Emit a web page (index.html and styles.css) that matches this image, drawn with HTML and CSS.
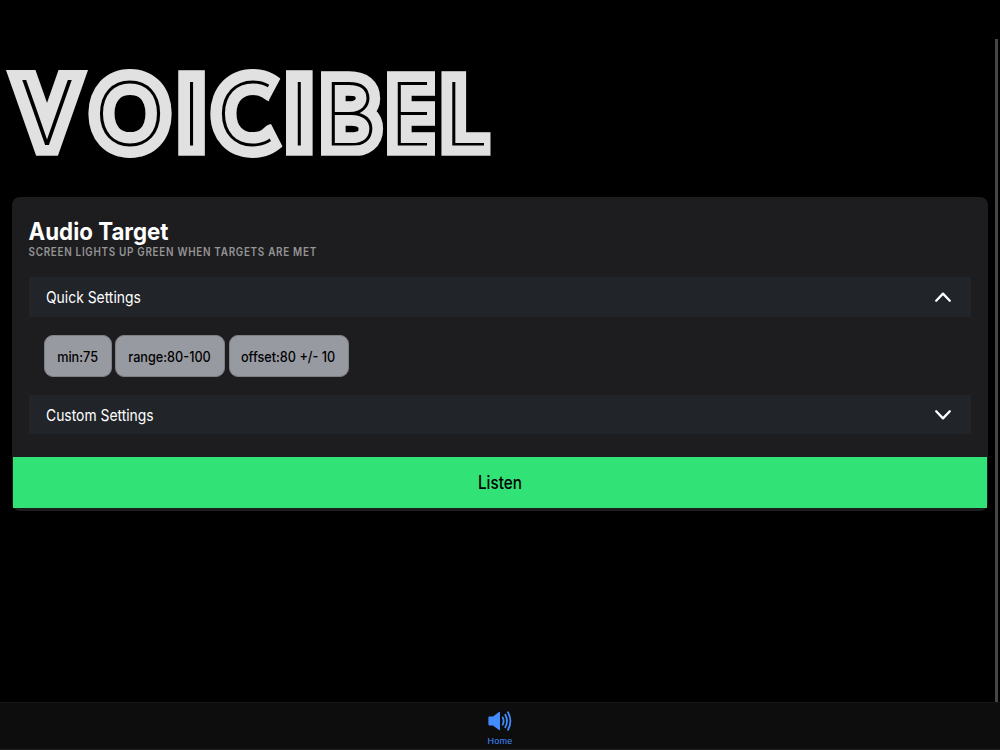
FILE: index.html
```html
<!DOCTYPE html>
<html lang="en">
<head>
<meta charset="utf-8">
<title>Voicibel</title>
<link rel="stylesheet" href="styles.css">
</head>
<body>
<div class="app">
  <main class="content">
    <svg class="wordmark" width="500" height="110" viewBox="0 0 500 110" role="img" aria-label="Voicibel">
      <defs>
        <clipPath id="caps"><rect x="0" y="15" width="435" height="85.7"/></clipPath>
        <clipPath id="last-cap"><rect x="441" y="15" width="49.5" height="85.7"/></clipPath>
        <clipPath id="cap-lines"><rect x="0" y="25" width="427" height="65.6"/></clipPath>
        <clipPath id="last-line"><rect x="442" y="25" width="42" height="65.6"/></clipPath>
        <clipPath id="open-round"><path d="M200 0h93l-24 45 2 24 21 41h-92z"/></clipPath>
        <clipPath id="open-line"><path d="M200 0h85l-24 45v24l24 41h-85z"/></clipPath>
      </defs>
      <g class="wordmark-body">
        <g clip-path="url(#caps)">
          <text class="vee" transform="translate(21.1 89.3) scale(.935 1)">V</text>
          <text class="stem" y="89.5" x="180.8">I</text>
          <text class="stem" y="89.5" x="288.6">I</text>
          <text y="89.5" x="322.4">B</text>
          <text y="89.5" x="388.4">E</text>
        </g>
        <text class="round" y="90" x="94.7">O</text>
        <text class="round" y="90" x="216.8" clip-path="url(#open-round)">C</text>
        <text y="89.5" x="442.9" clip-path="url(#last-cap)">L</text>
      </g>
      <g class="wordmark-inline" aria-hidden="true">
        <g clip-path="url(#cap-lines)">
          <text class="vee" transform="translate(21.1 89.3) scale(.935 1)">V</text>
          <text y="89.5" x="180.8">I</text>
          <text y="89.5" x="288.6">I</text>
          <text y="89.5" x="322.4">B</text>
          <text y="89.5" x="388.4">E</text>
        </g>
        <text class="round" y="90" x="94.7">O</text>
        <text class="round" y="90" x="216.8" clip-path="url(#open-line)">C</text>
        <text y="89.5" x="442.9" clip-path="url(#last-line)">L</text>
      </g>
    </svg>
    <section class="card">
      <header class="card-header">
        <h1 class="title"><span class="fit">Audio Target</span></h1>
        <p class="subtitle"><span class="fit">Screen lights up green when targets are met</span></p>
      </header>
      <div class="accordion">
        <div class="row">
          <span class="fit">Quick Settings</span>
          <svg class="chevron" viewBox="0 0 18 12"><path d="M2.2 9.7 9 2.6l6.8 7.1"/></svg>
        </div>
        <div class="presets">
          <button class="chip chip-min"><span class="fit">min:75</span></button>
          <button class="chip chip-range"><span class="fit">range:80-100</span></button>
          <button class="chip chip-offset"><span class="fit">offset:80 +/- 10</span></button>
        </div>
        <div class="row row-custom">
          <span class="fit">Custom Settings</span>
          <svg class="chevron" viewBox="0 0 18 12"><path d="M2.2 2.3 9 9.4l6.8-7.1"/></svg>
        </div>
      </div>
      <button class="listen"><span class="fit">Listen</span></button>
    </section>
    <div class="scrollbar"></div>
  </main>
  <nav class="tabs">
    <a class="tab">
      <svg class="speaker" viewBox="0 0 24 20"><path class="cone" d="M1.2 5.6H5L11 .9q1-.6 1 .5v17.2q0 1.1-1 .5L5 14.4H1.2q-.8 0-.8-.8V6.4q0-.8.8-.8z"/><path class="wave" d="M14.7 6.4q1.8 3.6 0 7.2M17.3 3.8q3.4 6.2 0 12.4M20 1.2q4.8 8.8 0 17.6"/></svg>
      <span>Home</span>
    </a>
  </nav>
</div>
</body>
</html>
```
FILE: styles.css
```css
* { box-sizing: border-box; }
body { margin: 0; background: #000; color: #fff; font-family: Inter, "Liberation Sans", sans-serif; }
.app { width: 1000px; height: 750px; display: flex; flex-direction: column; overflow: hidden; }
.content { position: relative; flex: 1; padding: 55px 12px 0 11.5px; }
.wordmark { display: block; margin-left: -11.5px; }
.wordmark text { font-family: Lato, sans-serif; font-weight: 100; font-size: 88.5px; stroke-miterlimit: 10; }
.wordmark .round { font-size: 90px; }
.wordmark .vee { font-family: Inter, sans-serif; font-size: 87px; }
.wordmark-body { fill: #e1e1e1; stroke: #e1e1e1; stroke-width: 23.5px; }
.wordmark-body .stem { stroke-width: 25.5px; }
.wordmark-body .round { stroke-width: 25px; }
.wordmark-body .vee { stroke-width: 27.5px; }
.wordmark-inline { fill: #000; stroke: #000; stroke-width: 2px; }
.card { height: 314px; margin-top: 32px; padding: 20px 1px 3px 1.5px; display: flex; flex-direction: column; border-radius: 8px; background: #1d1d1f; }
.card-header { padding: 0 16px; }
.fit { display: inline-block; transform-origin: 0 50%; white-space: nowrap; }
.title { margin: 0; font-size: 24px; line-height: 28px; font-weight: 700; }
.title .fit { transform: translate(-.5px, .5px) scaleX(.93); }
.subtitle { margin: 0; font-size: 11.3px; line-height: 14px; font-weight: 600; letter-spacing: .8px; text-transform: uppercase; color: #949495; }
.subtitle .fit { transform: translateX(-.5px) scaleX(.876); }
.accordion { margin: 18px 16px 0 15.5px; }
.row { height: 40px; padding: 0 19.5px 0 17px; display: flex; align-items: center; justify-content: space-between; background: #212429; font-size: 16px; }
.row .fit { transform: scaleX(.868); }
.row-custom { height: 39px; }
.chevron { width: 18px; height: 12px; fill: none; stroke: #fff; stroke-width: 2.3; stroke-linecap: round; stroke-linejoin: round; }
.presets { display: flex; gap: 3.5px; padding: 18px 15px; }
.chip { height: 42px; padding: 0; border: 1px solid #7f8087; border-radius: 9px; background: #989aa2; color: #000; font: 450 14px Inter, sans-serif; }
.chip .fit, .listen .fit { transform-origin: 50% 50%; transform: scaleX(.905); }
.chip-min { width: 68px; }
.chip-range { width: 110px; }
.chip-offset { width: 120px; }
.listen { height: 51px; margin-top: auto; padding: 0; border: 0; background: #31e276; color: #000; font: 500 18px Inter, sans-serif; }
.listen .fit { transform: scaleX(.85); }
.scrollbar { position: absolute; right: 2px; top: 39px; bottom: 0; width: 3px; background: #464646; }
.tabs { height: 48px; display: flex; justify-content: center; border-top: 1px solid #171717; border-bottom: 1px solid #222; background: #0d0d0d; }
.tab { display: flex; flex-direction: column; align-items: center; padding-top: 8px; color: #428cff; font: 9px/12px "Liberation Sans", sans-serif; letter-spacing: .2px; }
.speaker { width: 24px; height: 20px; margin-bottom: 4px; }
.cone { fill: #428cff; }
.wave { fill: none; stroke: #428cff; stroke-width: 1.8; stroke-linecap: round; }
```
